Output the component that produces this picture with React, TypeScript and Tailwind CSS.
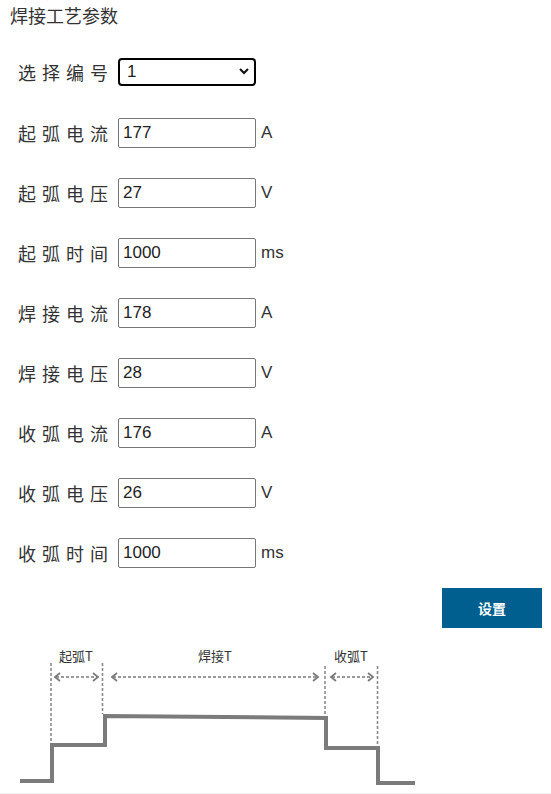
import React from "react";

const rows: { label: string; value: string; unit: string }[] = [
  { label: "起弧电流", value: "177", unit: "A" },
  { label: "起弧电压", value: "27", unit: "V" },
  { label: "起弧时间", value: "1000", unit: "ms" },
  { label: "焊接电流", value: "178", unit: "A" },
  { label: "焊接电压", value: "28", unit: "V" },
  { label: "收弧电流", value: "176", unit: "A" },
  { label: "收弧电压", value: "26", unit: "V" },
  { label: "收弧时间", value: "1000", unit: "ms" },
];

const cjk = "font-['Noto_Sans_CJK_SC','Noto_Sans',sans-serif]";
const latin = "font-['Liberation_Sans','Noto_Sans_CJK_SC',sans-serif]";

function Label({ text }: { text: string }) {
  return (
    <div className={`w-[118px] pl-[18px] text-[18px] leading-[24px] tracking-[6px] text-[#333] ${cjk}`}>
      {text}
    </div>
  );
}

function Arrow({ x1, x2, y }: { x1: number; x2: number; y: number }) {
  return (
    <g stroke="#7a7a7a" fill="none" strokeWidth={1.4}>
      <line x1={x1 + 1} y1={y} x2={x2 - 1} y2={y} strokeDasharray="3 2" />
      <polyline points={`${x1 + 5},${y - 4} ${x1},${y} ${x1 + 5},${y + 4}`} strokeWidth={1.8} />
      <polyline points={`${x2 - 5},${y - 4} ${x2},${y} ${x2 - 5},${y + 4}`} strokeWidth={1.8} />
    </g>
  );
}

export default function App() {
  return (
    <div className="w-[551px] bg-white text-[#333]">
      <div className="h-[58px] pl-[10px] pt-[2px]">
        <div className={`text-[18px] leading-[27px] text-[#333] ${cjk}`}>焊接工艺参数</div>
      </div>

      <div className="flex h-[28px] items-center">
        <Label text="选择编号" />
        <div className="relative h-[28px] w-[138px]">
          <select
            defaultValue="1"
            className={`h-[28px] w-[138px] appearance-none rounded-[4px] border-2 border-black bg-white pl-[7px] text-[17px] leading-[24px] text-[#222] outline-none ${latin}`}
          >
            <option value="1">1</option>
            <option value="2">2</option>
          </select>
          <svg className="pointer-events-none absolute right-[7px] top-[10px]" width="10" height="7" viewBox="0 0 10 7">
            <polyline points="1,1 5,5 9,1" fill="none" stroke="#111" strokeWidth="2" />
          </svg>
        </div>
      </div>

      <div className="mt-[32px] flex flex-col gap-[30px]">
        {rows.map((r) => (
          <div key={r.label} className="flex h-[30px] items-center">
            <Label text={r.label} />
            <input
              defaultValue={r.value}
              className={`h-[30px] w-[138px] rounded-[2px] border border-[#767676] bg-white px-[4px] text-[17px] text-[#222] outline-none ${latin}`}
            />
            <span className={`ml-[5px] text-[17px] text-[#333] ${latin}`}>{r.unit}</span>
          </div>
        ))}
      </div>

      <div className="mt-[20px] flex justify-end pr-[9px]">
        <button className={`h-[40px] w-[100px] bg-[#005f8e] text-[14px] font-bold text-white ${cjk}`}>设置</button>
      </div>

      <svg className="mt-[10px] block" width="551" height="155" viewBox="0 0 551 155">
        <g fontFamily="'Noto Sans CJK SC', sans-serif" fontSize="13" fill="#333" textAnchor="middle">
          <text x="76" y="23">起弧T</text>
          <text x="215" y="23">焊接T</text>
          <text x="351" y="23">收弧T</text>
        </g>
        <g stroke="#8a8a8a" strokeWidth="1.6" strokeDasharray="3 2">
          <line x1="51" y1="25" x2="51" y2="105" />
          <line x1="102.5" y1="25" x2="102.5" y2="76" />
          <line x1="325" y1="28" x2="325" y2="79" />
          <line x1="377.5" y1="28" x2="377.5" y2="109" />
        </g>
        <Arrow x1={55} x2={98} y={39} />
        <Arrow x1={112} x2={318} y={39} />
        <Arrow x1={331} x2={373} y={39} />
        <polyline
          points="20,143 52,143 52,107 105,107 105,78 326,80 326,110 378,110 378,145 415,145"
          fill="none"
          stroke="#7b7b7b"
          strokeWidth="4"
        />
      </svg>
      <div className="h-px w-full bg-[#eeeeee]" />
    </div>
  );
}
